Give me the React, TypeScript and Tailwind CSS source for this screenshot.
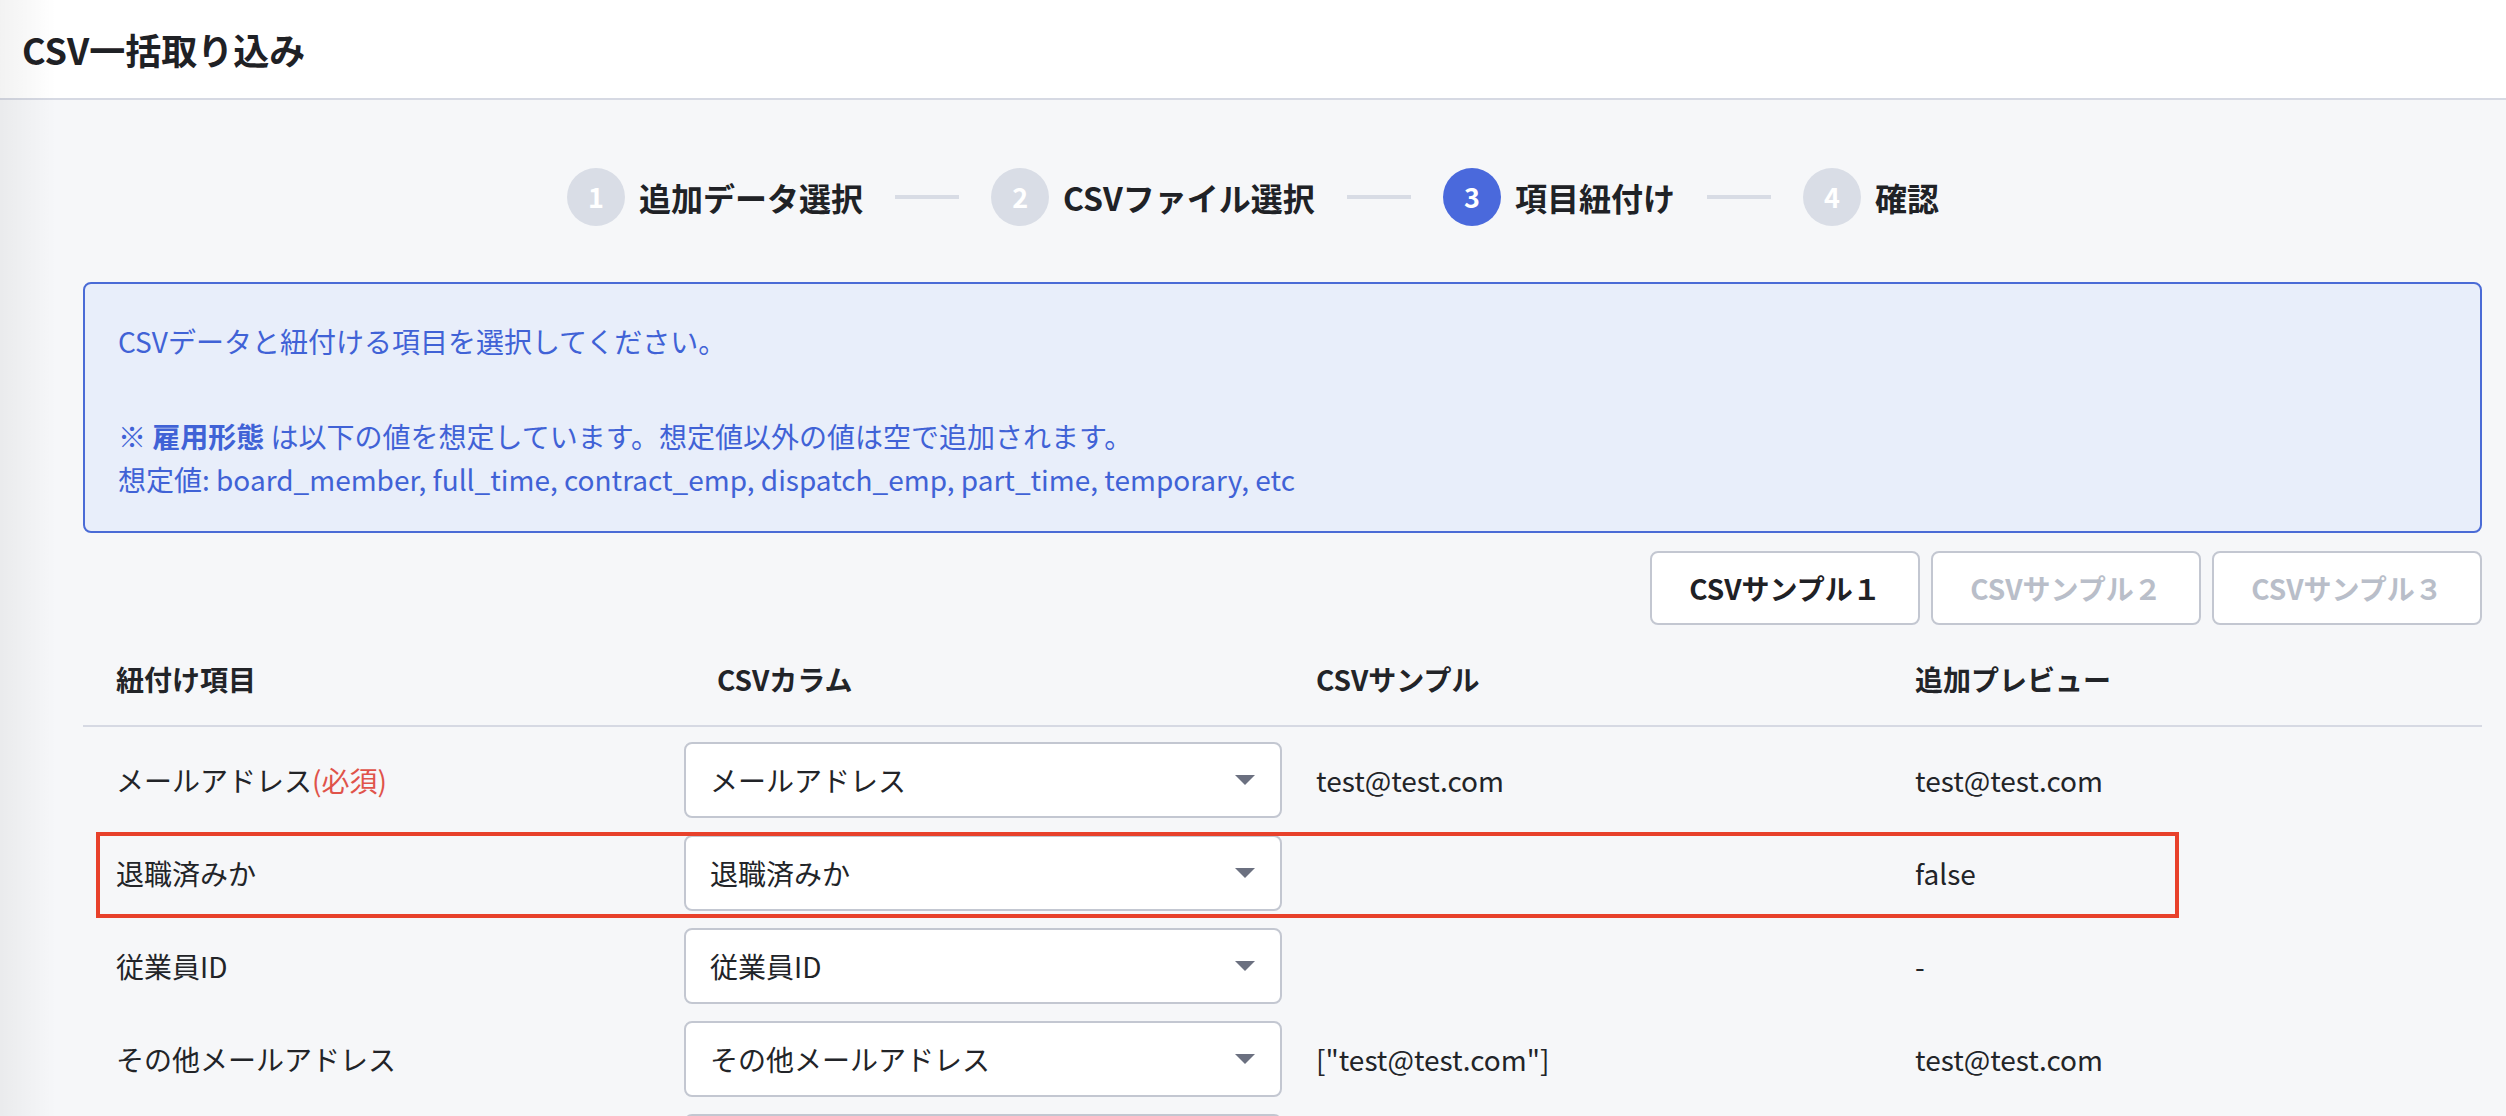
const steps = [
  { no: "1", label: "追加データ選択", active: false },
  { no: "2", label: "CSVファイル選択", active: false },
  { no: "3", label: "項目紐付け", active: true },
  { no: "4", label: "確認", active: false },
];

const rows = [
  { label: "メールアドレス", required: true, column: "メールアドレス", sample: "test@test.com", preview: "test@test.com" },
  { label: "退職済みか", required: false, column: "退職済みか", sample: "", preview: "false", marked: true },
  { label: "従業員ID", required: false, column: "従業員ID", sample: "", preview: "-" },
  { label: "その他メールアドレス", required: false, column: "その他メールアドレス", sample: '["test@test.com"]', preview: "test@test.com" },
  { label: "", required: false, column: "", sample: "", preview: "" },
];

function Stepper() {
  return (
    <div className="flex justify-center items-center mt-[68px]">
      {steps.map((s, i) => (
        <div key={s.no} className="flex items-center">
          {i > 0 && <div className="w-[64px] h-[4px] bg-[#d8dce5] mx-[32px]" />}
          <div
            className={`w-[58px] h-[58px] rounded-full flex items-center justify-center text-white font-bold text-[27px] ${
              s.active ? "bg-[#4a69dc]" : "bg-[#d9dde6]"
            }`}
          >
            {s.no}
          </div>
          <span className="ml-[14px] text-[32px] font-bold text-[#202226]">{s.label}</span>
        </div>
      ))}
    </div>
  );
}

function Select({ value }: { value: string }) {
  return (
    <div className="w-[598px] h-[76px] shrink-0 bg-white border-2 border-[#c3c7d1] rounded-[8px] flex items-center justify-between pl-[24px] pr-[25px]">
      <span>{value}</span>
      <svg width="20" height="10" viewBox="0 0 20 10">
        <path d="M0 0 L20 0 L10 10 Z" fill="#6b7080" />
      </svg>
    </div>
  );
}

export default function App() {
  return (
    <div
      className="relative min-h-[1116px] bg-[#f6f7f9] text-[#222428] overflow-hidden"
      style={{ fontFamily: '"Noto Sans CJK JP", "Noto Sans", sans-serif' }}
    >
      {/* left edge shadow */}
      <div className="absolute left-0 top-0 h-full w-[56px] bg-gradient-to-r from-black/[0.05] to-transparent pointer-events-none" />

      <header className="h-[100px] bg-white border-b-2 border-[#d6d9e3] flex items-center pl-[22px]">
        <h1 className="text-[36px] font-bold text-[#1f2125]">CSV一括取り込み</h1>
      </header>

      <Stepper />

      <div className="pl-[83px] pr-[24px] mt-[56px]">
        {/* info */}
        <div className="border-2 border-[#4a6bd6] bg-[#e8eefa] rounded-[8px] pl-[33px] pt-[36px] pb-[30px] text-[28px] leading-[43px] text-[#4062d6]">
          <p className="mb-[52px]">CSVデータと紐付ける項目を選択してください。</p>
          <p>
            ※ <span className="font-bold">雇用形態</span> は以下の値を想定しています。想定値以外の値は空で追加されます。
          </p>
          <p>想定値: board_member, full_time, contract_emp, dispatch_emp, part_time, temporary, etc</p>
        </div>

        {/* sample buttons */}
        <div className="flex justify-end gap-[11px] mt-[18px]">
          {["CSVサンプル１", "CSVサンプル２", "CSVサンプル３"].map((b, i) => (
            <button
              key={b}
              className={`w-[270px] h-[74px] bg-white border-2 border-[#c3c7d1] rounded-[8px] text-[28px] font-bold ${
                i === 0 ? "text-[#1f2125]" : "text-[#b9bec9]"
              }`}
            >
              {b}
            </button>
          ))}
        </div>

        {/* table */}
        <div className="flex items-center pt-[34px] pb-[26px] border-b-2 border-[#d6d9e3] text-[28px] font-bold leading-[40px]">
          <div className="w-[601px] shrink-0 pl-[33px]">紐付け項目</div>
          <div className="w-[598px] shrink-0 pl-[33px]">CSVカラム</div>
          <div className="w-[633px] shrink-0 pl-[34px]">CSVサンプル</div>
          <div className="flex-1">追加プレビュー</div>
        </div>

        <div className="flex flex-col gap-[17px] pt-[15px] text-[28px]">
          {rows.map((r, idx) => (
            <div key={idx} className="relative flex items-center h-[76px]">
              <div className="w-[601px] shrink-0 pl-[33px]">
                {r.label}
                {r.required && <span className="text-[#e0534a]">(必須)</span>}
              </div>
              <Select value={r.column} />
              <div className="w-[633px] shrink-0 pl-[34px]">{r.sample}</div>
              <div className="flex-1">{r.preview}</div>
              {r.marked && (
                <div className="absolute left-[13px] top-[-3px] w-[2083px] h-[86px] border-[4px] border-[#e8412b] pointer-events-none" />
              )}
            </div>
          ))}
        </div>
      </div>
    </div>
  );
}
